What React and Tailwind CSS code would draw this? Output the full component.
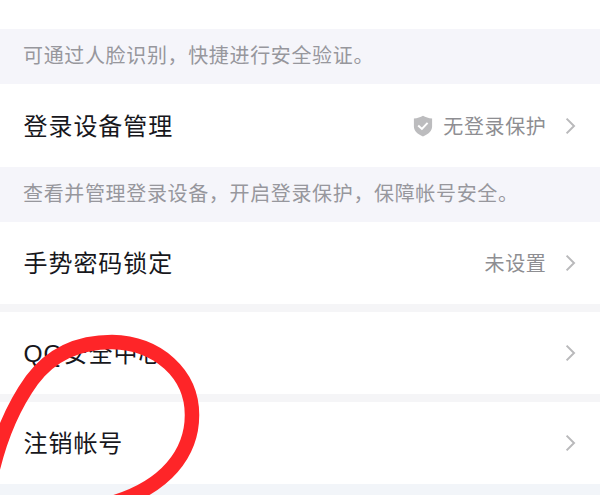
import React from "react";

function Chevron() {
  return (
    <svg width="12" height="18" viewBox="0 0 12 18" fill="none" className="shrink-0">
      <path d="M1.6 1.6 9 9 1.6 16.4" stroke="#b9b9bb" strokeWidth="2" />
    </svg>
  );
}

function Shield() {
  return (
    <svg width="20" height="22" viewBox="0 0 20 22" fill="none" className="shrink-0">
      <path
        d="M10 .8c2.500 1.500 5.600 2.500 9.100 2.800v8c0 4.400-3.600 7.700-9.100 9.900-5.500-2.200-9.100-5.500-9.100-9.900v-8C4.400 3.300 7.500 2.300 10 .8Z"
        fill="#bcbcbe"
      />
      <path d="m5.200 10.400 3.700 3.500 5.700-6" stroke="#fff" strokeWidth="2" />
    </svg>
  );
}

function Note({ children }) {
  return (
    <div className="flex h-[55px] items-center bg-[#f5f5fa] pr-6 pb-[3px] pl-[23px] text-[20px] tracking-[0.650px] text-[#97979d]">
      {children}
    </div>
  );
}

function Row({ title, value, icon }) {
  return (
    <div className="flex h-[82px] items-center justify-between bg-white pr-[23px] pl-[23.500px]">
      <span className="pb-[3px] text-[24px] tracking-[0.950px] text-[#17171c]">{title}</span>
      <div className="flex items-center">
        {icon}
        {value ? (
          <span className="mr-[18.500px] ml-2.5 pb-px text-[20px] tracking-[0.650px] text-[#8e8e92]">
            {value}
          </span>
        ) : null}
        <Chevron />
      </div>
    </div>
  );
}

function MarkerLoop() {
  return (
    <svg
      className="pointer-events-none absolute inset-0"
      width="600"
      height="495"
      viewBox="0 0 600 495"
      fill="none"
    >
      <path
        d="M-8 472C0 438 14 405 32 380C50 356 76 342 112 342C158 343 192 374 192 415C192 453 166 487 112 503"
        stroke="#fe2528"
        strokeWidth="14.500"
      />
    </svg>
  );
}

export default function App() {
  return (
    <div
      lang="zh-CN"
      className="relative h-[495px] w-[600px] overflow-hidden bg-[#f5f5f7] font-['Noto_Sans_CJK_SC',sans-serif] leading-none whitespace-nowrap"
    >
      <div className="h-[29px] bg-white" />
      <Note>可通过人脸识别，快捷进行安全验证。</Note>
      <div className="bg-white pt-px">
        <Row title="登录设备管理" value="无登录保护" icon={<Shield />} />
      </div>
      <Note>查看并管理登录设备，开启登录保护，保障帐号安全。</Note>
      <div className="flex flex-col gap-2">
        <Row title="手势密码锁定" value="未设置" />
        <Row
          title={
            <>
              <span className="font-['Liberation_Sans',sans-serif] text-[24.500px] leading-[0]">
                QQ
              </span>
              安全中心
            </>
          }
        />
        <Row title="注销帐号" />
      </div>
      <div className="-mt-px h-3 bg-[#f2f5f9]" />
      <MarkerLoop />
    </div>
  );
}
